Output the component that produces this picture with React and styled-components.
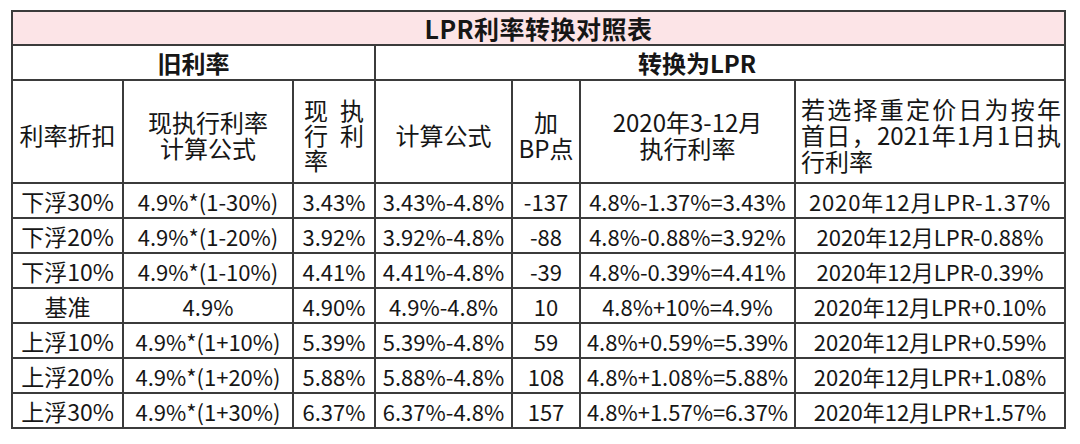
import styled, { createGlobalStyle } from 'styled-components';

const GlobalStyle = createGlobalStyle`
  html, body {
    margin: 0;
    padding: 0;
    background: #fff;
  }
  body {
    font-family: 'Noto Sans CJK SC', 'Noto Sans', sans-serif;
    color: #161616;
  }
`;

const colWidths = [111, 170, 82, 137, 68, 215, 270];

const rows = [
  ['下浮30%', '4.9%*(1-30%)', '3.43%', '3.43%-4.8%', '-137', '4.8%-1.37%=3.43%', '2020年12月LPR-1.37%'],
  ['下浮20%', '4.9%*(1-20%)', '3.92%', '3.92%-4.8%', '-88', '4.8%-0.88%=3.92%', '2020年12月LPR-0.88%'],
  ['下浮10%', '4.9%*(1-10%)', '4.41%', '4.41%-4.8%', '-39', '4.8%-0.39%=4.41%', '2020年12月LPR-0.39%'],
  ['基准', '4.9%', '4.90%', '4.9%-4.8%', '10', '4.8%+10%=4.9%', '2020年12月LPR+0.10%'],
  ['上浮10%', '4.9%*(1+10%)', '5.39%', '5.39%-4.8%', '59', '4.8%+0.59%=5.39%', '2020年12月LPR+0.59%'],
  ['上浮20%', '4.9%*(1+20%)', '5.88%', '5.88%-4.8%', '108', '4.8%+1.08%=5.88%', '2020年12月LPR+1.08%'],
  ['上浮30%', '4.9%*(1+30%)', '6.37%', '6.37%-4.8%', '157', '4.8%+1.57%=6.37%', '2020年12月LPR+1.57%'],
];

function App() {
  return (
    <Page>
      <GlobalStyle />
      <Table>
        <colgroup>
          {colWidths.map((w, i) => (
            <col key={i} style={{ width: w }} />
          ))}
        </colgroup>
        <thead>
          <tr>
            <TitleCell colSpan={7}>LPR利率转换对照表</TitleCell>
          </tr>
          <tr>
            <SectionCell colSpan={3}>旧利率</SectionCell>
            <SectionCell colSpan={4} $shift={46}>转换为LPR</SectionCell>
          </tr>
          <tr>
            <HeadCell>利率折扣</HeadCell>
            <HeadCell>
              现执行利率
              <br />
              计算公式
            </HeadCell>
            <HeadCell>
              <Stack>
                <StackLine><span>现</span><span>执</span></StackLine>
                <StackLine><span>行</span><span>利</span></StackLine>
                <StackLine><span>率</span></StackLine>
              </Stack>
            </HeadCell>
            <HeadCell>计算公式</HeadCell>
            <HeadCell>
              加
              <br />
              BP点
            </HeadCell>
            <HeadCell>
              2020年3-12月
              <br />
              执行利率
            </HeadCell>
            <HeadCell $align='justify'>若选择重定价日为按年首日，2021年1月1日执行利率</HeadCell>
          </tr>
        </thead>
        <tbody>
          {rows.map((row, r) => (
            <tr key={r}>
              {row.map((text, c) => (
                <Cell key={c} $first={c === 0} $spread={r === 0 && c === 6}>
                  {text}
                </Cell>
              ))}
            </tr>
          ))}
        </tbody>
      </Table>
    </Page>
  );
}

export default App;

const Page = styled.div`
  padding: 10px 0 0 11px;
`;

const Table = styled.table`
  width: 1055px;
  table-layout: fixed;
  border-collapse: collapse;

  td,
  th {
    border: 2px solid #3b3b3b;
    padding: 0;
  }
`;

const TitleCell = styled.th`
  height: 32px;
  background: #fce4e7;
  font-size: 25px;
  font-weight: 700;
  letter-spacing: 0.5px;
  text-align: center;
  line-height: 30px;
`;

const SectionCell = styled.th`
  height: 33px;
  font-size: 24px;
  font-weight: 700;
  text-align: center;
  line-height: 30px;
  padding-right: ${({ $shift }) => $shift || 0}px !important;
`;

const HeadCell = styled.td`
  height: 95px;
  padding: 6px 3px 0 ${({ $align }) => ($align === 'justify' ? 5 : 3)}px !important;
  font-size: 24px;
  line-height: 26px;
  text-align: ${({ $align }) => $align || 'center'};
  vertical-align: middle;
`;

const Stack = styled.div`
  width: 60px;
  margin: 0 auto;
  line-height: 25px;
`;

const StackLine = styled.div`
  display: flex;
  justify-content: space-between;
`;

const Cell = styled.td`
  height: 33px;
  font-size: ${({ $first }) => ($first ? 23 : 22)}px;
  line-height: 30px;
  text-align: center;
  white-space: nowrap;
  letter-spacing: ${({ $spread }) => ($spread ? '0.9px' : 'normal')};
`;
